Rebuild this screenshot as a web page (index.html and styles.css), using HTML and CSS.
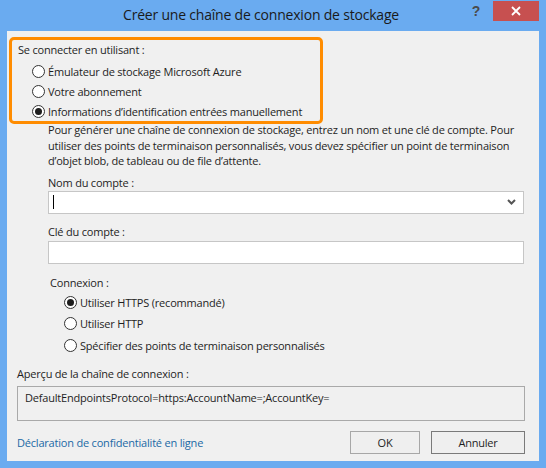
FILE: index.html
```html
<!DOCTYPE html>
<html lang="fr">
<head>
<meta charset="utf-8">
<title>Créer une chaîne de connexion de stockage</title>
<link rel="stylesheet" href="styles.css">
</head>
<body>
<div class="window">
  <div class="titlebar">
    <div class="title">Créer une chaîne de connexion de stockage</div>
    <div class="controls">
      <span class="help">?</span>
      <span class="close">
        <svg width="10" height="10" viewBox="0 0 10 10"><path d="M1 1 L9 9 M9 1 L1 9" stroke="#fff" stroke-width="1.8" fill="none"/></svg>
      </span>
    </div>
  </div>
  <div class="content">
    <div class="highlight">
      <div class="label">Se connecter en utilisant :</div>
      <div class="radio-list">
        <div class="radio"><span class="circle"></span>Émulateur de stockage Microsoft Azure</div>
        <div class="radio"><span class="circle"></span>Votre abonnement</div>
        <div class="radio"><span class="circle checked"></span>Informations d’identification entrées manuellement</div>
      </div>
    </div>
    <div class="form">
      <p class="desc">Pour générer une chaîne de connexion de stockage, entrez un nom et une clé de compte. Pour<br>utiliser des points de terminaison personnalisés, vous devez spécifier un point de terminaison<br>d’objet blob, de tableau ou de file d’attente.</p>
      <div class="field-label">Nom du compte :</div>
      <div class="combo">
        <span class="caret"></span>
        <svg class="chevron" width="9" height="6" viewBox="0 0 9 6"><path d="M1 1 L4.5 4.5 L8 1" stroke="#555" stroke-width="2" fill="none"/></svg>
      </div>
      <div class="field-label second">Clé du compte :</div>
      <div class="textbox"></div>
      <div class="group-label">Connexion :</div>
      <div class="radio-list sub">
        <div class="radio"><span class="circle checked"></span>Utiliser HTTPS (recommandé)</div>
        <div class="radio"><span class="circle"></span>Utiliser HTTP</div>
        <div class="radio"><span class="circle"></span>Spécifier des points de terminaison personnalisés</div>
      </div>
    </div>
    <div class="preview-label">Aperçu de la chaîne de connexion :</div>
    <div class="preview">DefaultEndpointsProtocol=https:AccountName=;AccountKey=</div>
    <div class="footer">
      <a class="link" href="#">Déclaration de confidentialité en ligne</a>
      <div class="buttons">
        <button class="btn ok">OK</button>
        <button class="btn cancel">Annuler</button>
      </div>
    </div>
  </div>
</div>
</body>
</html>
```
FILE: styles.css
```css
* { box-sizing: border-box; }
html, body { margin: 0; padding: 0; }
body {
  width: 546px;
  height: 468px;
  overflow: hidden;
  font-family: "Segoe UI", "Open Sans", "Noto Sans", sans-serif;
  font-size: 11px;
  letter-spacing: -0.2px;
  color: #1e1e1e;
}
.window {
  width: 546px;
  height: 468px;
  background: #6aabf0;
  padding: 0 7px 7px;
  display: flex;
  flex-direction: column;
}
.titlebar {
  height: 31px;
  display: grid;
}
.title, .controls { grid-area: 1 / 1; }
.title {
  justify-self: start;
  width: 508px;
  text-align: center;
  font-size: 14px;
  letter-spacing: -0.2px;
  line-height: 30px;
  color: #1a1a1a;
}
.controls {
  justify-self: end;
  align-self: start;
  display: flex;
  align-items: flex-start;
}
.help {
  font-family: "Liberation Sans", sans-serif;
  font-weight: bold;
  font-size: 14px;
  color: #4a4a4a;
  line-height: 22px;
  margin-right: 13px;
}
.close {
  width: 46px;
  height: 20px;
  margin-top: 1px;
  background: #c75050;
  display: flex;
  align-items: center;
  justify-content: center;
}
.content {
  flex: 1;
  background: #f0f0f0;
  padding: 6px 0 0 2px;
  display: flex;
  flex-direction: column;
  white-space: nowrap;
}
.highlight {
  width: 314px;
  height: 87px;
  flex: none;
  border: 3px solid #ff8c00;
  border-radius: 5px;
  padding: 2px 0 0 6px;
}
.label, .field-label, .group-label, .preview-label { line-height: 16px; }
.radio-list {
  margin-top: 3px;
  margin-left: 14px;
}
.radio {
  height: 20px;
  display: flex;
  align-items: center;
}
.circle {
  width: 13px;
  height: 13px;
  border: 1px solid #333;
  border-radius: 50%;
  background: #fff;
  margin-right: 3px;
  flex: none;
  display: flex;
  align-items: center;
  justify-content: center;
}
.circle.checked::after {
  content: "";
  width: 7px;
  height: 7px;
  border-radius: 50%;
  background: #1e1e1e;
}
.form {
  margin-left: 39px;
  width: 476px;
}
.desc {
  margin: -2px 0 0;
  line-height: 15.5px;
}
.field-label { margin-top: 6px; }
.field-label.second { margin-top: 10px; }
.combo, .textbox {
  height: 23px;
  background: #fff;
  border: 1px solid #c6c6c6;
}
.textbox { margin-top: 1px; }
.combo {
  display: flex;
  align-items: center;
  justify-content: space-between;
  padding: 0 7px 0 4px;
}
.caret {
  width: 1px;
  height: 14px;
  background: #000;
}
.group-label {
  margin-top: 11px;
  margin-left: 2px;
}
.radio-list.sub {
  margin-top: 1px;
  margin-left: 16px;
}
.radio-list.sub .radio { height: 21.5px; }
.preview-label {
  margin-top: 10px;
  margin-left: 8px;
}
.preview {
  margin: 4px 0 0 8px;
  width: 508px;
  height: 35px;
  flex: none;
  border: 1px solid #a9a9a9;
  padding: 3px 7px;
  line-height: 16px;
}
.footer {
  margin: 10px 14px 0 8px;
  display: flex;
  align-items: center;
  justify-content: space-between;
}
.link {
  color: #1a69a5;
  text-decoration: none;
}
.buttons { display: flex; gap: 11px; }
.btn {
  font-family: inherit;
  font-size: 11px;
  letter-spacing: inherit;
  color: #1e1e1e;
  height: 23px;
  background: #efefef;
  border: 1px solid #7a7a7a;
  padding: 0;
}
.btn.ok { width: 70px; border-color: #a7a7a7; }
.btn.cancel { width: 94px; }
```
